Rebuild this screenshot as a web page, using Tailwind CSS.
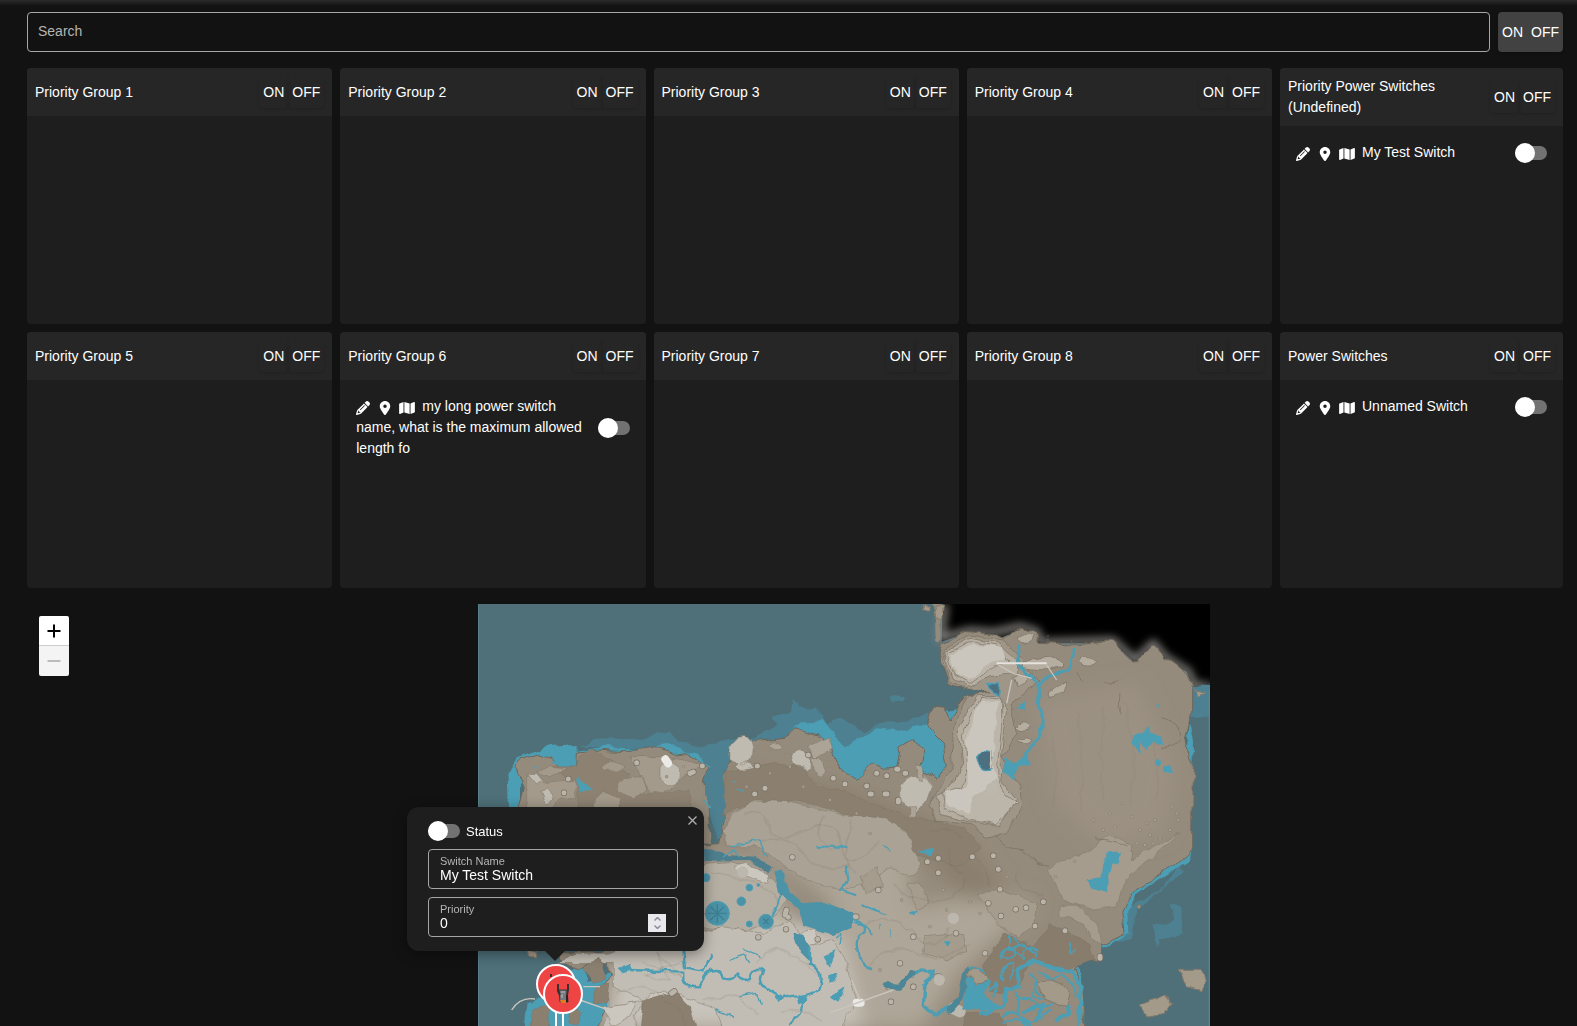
<!DOCTYPE html>
<html lang="en">
<head>
<meta charset="utf-8">
<meta name="viewport" content="width=device-width, initial-scale=1">
<title>Power Switches</title>
<script src="https://cdn.jsdelivr.net/npm/@tailwindcss/browser@4"></script>
</head>
<body class="flex h-screen flex-col overflow-hidden bg-[#121212] pr-3.5 pl-[27px] font-['Liberation_Sans',Arial,sans-serif] text-sm leading-[21px] text-white">

<!-- Shared icon shapes -->
<svg class="hidden" aria-hidden="true">
  <symbol id="pencil" viewBox="0 0 512 512"><path fill="currentColor" d="M410.3 231l11.3-11.3-33.9-33.9-62.1-62.1L291.7 89.8l-11.3 11.3-22.6 22.6L58.6 322.9c-10.4 10.4-18 23.3-22.2 37.4L1 480.7c-2.5 8.4-.2 17.5 6.1 23.7s15.3 8.5 23.7 6.1l120.3-35.4c14.1-4.2 27-11.8 37.4-22.2L387.7 253.7 410.3 231zM160 399.4l-9.1 22.7c-4 3.1-8.5 5.4-13.3 6.9L59.4 452l23-78.1c1.4-4.9 3.8-9.4 6.9-13.3l22.7-9.1v32c0 8.8 7.2 16 16 16h32zM362.7 18.7L348.3 33.2 325.7 55.8 314.3 67.1l33.9 33.9 62.1 62.1 33.9 33.9 11.3-11.3 22.6-22.6 14.5-14.5c25-25 25-65.5 0-90.5L453.3 18.7c-25-25-65.5-25-90.5 0zm-47.4 168l-144 144c-6.2 6.2-16.4 6.2-22.6 0s-6.2-16.4 0-22.6l144-144c6.2-6.2 16.4-6.2 22.6 0s6.2 16.4 0 22.6z"/></symbol>
  <symbol id="pin" viewBox="0 0 384 512"><path fill="currentColor" d="M215.7 499.2C267 435 384 279.4 384 192C384 86 298 0 192 0S0 86 0 192c0 87.4 117 243 168.3 307.2c12.3 15.3 35.1 15.3 47.4 0zM192 128a64 64 0 1 1 0 128 64 64 0 1 1 0-128z"/></symbol>
  <symbol id="map" viewBox="0 0 576 512"><path fill="currentColor" d="M384 476.1L192 421.2V35.9L384 90.8V476.1zm32-1.2V88.4L543.1 37.5c15.8-6.3 32.9 5.3 32.9 22.3V394.6c0 9.8-6 18.6-15.1 22.3L416 474.8zM15.1 95.1L160 37.2V423.6L32.9 474.5C17.1 480.8 0 469.2 0 452.2V117.4c0-9.8 6-18.6 15.1-22.3z"/></symbol>
</svg>

<div class="pointer-events-none absolute inset-x-0 top-0 h-1.5 bg-linear-to-b from-[#2c2c2c] to-[#121212]"></div>

<header class="flex shrink-0 gap-2 pt-3">
  <input type="search" aria-label="Search" placeholder="Search" class="h-10 min-w-0 flex-1 rounded border border-[#a6a6a6] bg-transparent px-2.5 pb-0.5 placeholder:text-[#b5b5b5]">
  <div class="flex h-10 w-[65px] items-center rounded bg-[#424242] shadow">
    <button class="h-8 px-1">ON</button><button class="h-8 px-1">OFF</button>
  </div>
</header>

<main class="flex min-h-0 flex-1 flex-col gap-4 pt-4">
  <div class="grid shrink-0 grid-cols-[repeat(4,minmax(0,1fr))_283px] gap-2">
    <section class="h-64 overflow-hidden rounded bg-[#1e1e1e]">
      <div class="flex items-center justify-between bg-[#262626] p-2"><h2>Priority Group 1</h2><div class="flex shrink-0"><button class="h-8 rounded px-1 shadow">ON</button><button class="h-8 rounded px-1 shadow">OFF</button></div></div>
    </section>
    <section class="h-64 overflow-hidden rounded bg-[#1e1e1e]">
      <div class="flex items-center justify-between bg-[#262626] p-2"><h2>Priority Group 2</h2><div class="flex shrink-0"><button class="h-8 rounded px-1 shadow">ON</button><button class="h-8 rounded px-1 shadow">OFF</button></div></div>
    </section>
    <section class="h-64 overflow-hidden rounded bg-[#1e1e1e]">
      <div class="flex items-center justify-between bg-[#262626] p-2"><h2>Priority Group 3</h2><div class="flex shrink-0"><button class="h-8 rounded px-1 shadow">ON</button><button class="h-8 rounded px-1 shadow">OFF</button></div></div>
    </section>
    <section class="h-64 overflow-hidden rounded bg-[#1e1e1e]">
      <div class="flex items-center justify-between bg-[#262626] p-2"><h2>Priority Group 4</h2><div class="flex shrink-0"><button class="h-8 rounded px-1 shadow">ON</button><button class="h-8 rounded px-1 shadow">OFF</button></div></div>
    </section>
    <section class="h-64 overflow-hidden rounded bg-[#1e1e1e]">
      <div class="flex items-center justify-between bg-[#262626] p-2"><h2>Priority Power Switches (Undefined)</h2><div class="flex shrink-0"><button class="h-8 rounded px-1 shadow">ON</button><button class="h-8 rounded px-1 shadow">OFF</button></div></div>
      <div class="flex items-center justify-between gap-3 p-4">
        <p><button aria-label="Edit" class="mr-2 align-[-4px]"><svg class="size-3.5"><use href="#pencil"/></svg></button><button aria-label="Locate" class="mr-2 align-[-4px]"><svg class="size-3.5"><use href="#pin"/></svg></button><button aria-label="Show on map" class="mr-2 align-[-4px]"><svg class="-mx-px h-3.5 w-4"><use href="#map"/></svg></button><label for="sw1">My Test Switch</label></p>
        <input id="sw1" type="checkbox" role="switch" class="relative flex h-5 w-8 shrink-0 appearance-none items-center before:h-3.5 before:w-full before:rounded-full before:bg-[#727272] after:absolute after:left-0 after:size-5 after:rounded-full after:bg-white checked:after:left-3">
      </div>
    </section>

    <section class="h-64 overflow-hidden rounded bg-[#1e1e1e]">
      <div class="flex items-center justify-between bg-[#262626] p-2"><h2>Priority Group 5</h2><div class="flex shrink-0"><button class="h-8 rounded px-1 shadow">ON</button><button class="h-8 rounded px-1 shadow">OFF</button></div></div>
    </section>
    <section class="h-64 overflow-hidden rounded bg-[#1e1e1e]">
      <div class="flex items-center justify-between bg-[#262626] p-2"><h2>Priority Group 6</h2><div class="flex shrink-0"><button class="h-8 rounded px-1 shadow">ON</button><button class="h-8 rounded px-1 shadow">OFF</button></div></div>
      <div class="flex items-center justify-between gap-3 p-4">
        <p><button aria-label="Edit" class="mr-2 align-[-4px]"><svg class="size-3.5"><use href="#pencil"/></svg></button><button aria-label="Locate" class="mr-2 align-[-4px]"><svg class="size-3.5"><use href="#pin"/></svg></button><button aria-label="Show on map" class="mr-2 align-[-4px]"><svg class="-mx-px h-3.5 w-4"><use href="#map"/></svg></button><label for="sw2">my long power switch name, what is the maximum allowed length fo</label></p>
        <input id="sw2" type="checkbox" role="switch" class="relative flex h-5 w-8 shrink-0 appearance-none items-center before:h-3.5 before:w-full before:rounded-full before:bg-[#727272] after:absolute after:left-0 after:size-5 after:rounded-full after:bg-white checked:after:left-3">
      </div>
    </section>
    <section class="h-64 overflow-hidden rounded bg-[#1e1e1e]">
      <div class="flex items-center justify-between bg-[#262626] p-2"><h2>Priority Group 7</h2><div class="flex shrink-0"><button class="h-8 rounded px-1 shadow">ON</button><button class="h-8 rounded px-1 shadow">OFF</button></div></div>
    </section>
    <section class="h-64 overflow-hidden rounded bg-[#1e1e1e]">
      <div class="flex items-center justify-between bg-[#262626] p-2"><h2>Priority Group 8</h2><div class="flex shrink-0"><button class="h-8 rounded px-1 shadow">ON</button><button class="h-8 rounded px-1 shadow">OFF</button></div></div>
    </section>
    <section class="h-64 overflow-hidden rounded bg-[#1e1e1e]">
      <div class="flex items-center justify-between bg-[#262626] p-2"><h2>Power Switches</h2><div class="flex shrink-0"><button class="h-8 rounded px-1 shadow">ON</button><button class="h-8 rounded px-1 shadow">OFF</button></div></div>
      <div class="flex items-center justify-between gap-3 p-4">
        <p><button aria-label="Edit" class="mr-2 align-[-4px]"><svg class="size-3.5"><use href="#pencil"/></svg></button><button aria-label="Locate" class="mr-2 align-[-4px]"><svg class="size-3.5"><use href="#pin"/></svg></button><button aria-label="Show on map" class="mr-2 align-[-4px]"><svg class="-mx-px h-3.5 w-4"><use href="#map"/></svg></button><label for="sw3">Unnamed Switch</label></p>
        <input id="sw3" type="checkbox" role="switch" class="relative flex h-5 w-8 shrink-0 appearance-none items-center before:h-3.5 before:w-full before:rounded-full before:bg-[#727272] after:absolute after:left-0 after:size-5 after:rounded-full after:bg-white checked:after:left-3">
      </div>
    </section>
  </div>

  <!-- World map canvas -->
  <div class="relative min-h-0 flex-1 overflow-hidden">
    <svg class="absolute top-0 left-[451px] h-[422px] w-[732px]" viewBox="24 12 2196 1266" role="img" aria-label="World map">
      <defs>
        <filter id="rough" x="0" y="0" width="2300" height="1300" filterUnits="userSpaceOnUse"><feTurbulence type="fractalNoise" baseFrequency="0.022" numOctaves="2" seed="4"/><feDisplacementMap in="SourceGraphic" scale="26" xChannelSelector="R" yChannelSelector="G"/></filter>
        <filter id="rough2" x="0" y="0" width="2300" height="1300" filterUnits="userSpaceOnUse"><feTurbulence type="fractalNoise" baseFrequency="0.03" numOctaves="2" seed="9"/><feDisplacementMap in="SourceGraphic" scale="18" xChannelSelector="R" yChannelSelector="G"/></filter>
        <filter id="glow"><feGaussianBlur stdDeviation="12"/></filter>
        <filter id="soft"><feGaussianBlur stdDeviation="30"/></filter>
        <path id="land" d="M135 500L150 480 200 462 240 475 270 505 320 500 322 462 370 450 470 455 560 440 620 462 650 458 690 482 714 500 700 540 712 600 722 740H150L145 620 160 560ZM695 735V1055H262L270 1080 330 1112 400 1075 430 1125 408 1150 412 1220 380 1290H1840L1845 1170 1810 1110 1850 1080 1885 1085 1895 1035 1965 1000 1958 930 1985 880 2090 810 2150 770 2168 740 2170 500 2145 420 2168 340 2168 265 2155 225 2115 195 2085 175 2050 135 2000 185 1970 165 1930 125 1810 135 1705 130 1700 98 1650 85 1600 115 1570 102 1490 95 1412 130 1405 160 1440 250 1480 270 1565 250 1590 270 1550 275 1485 290 1440 360 1425 322 1390 318 1370 380 1420 430 1435 490 1400 540 1350 505 1366 445 1330 422 1292 445 1280 500 1240 505 1210 490 1160 535 1110 505 1085 450 1060 410 1030 405 980 388 945 412 850 422 815 412 790 470 762 520 760 640 745 735Z"/>
      </defs>
      <rect x="24" y="12" width="2196" height="1266" fill="#4f7079"/>
      <!-- Void in the north-east -->
      <path d="M1418 12H2220V268L2168 262 2150 215 2080 180 1990 185 1930 130H1705L1650 90 1590 115 1500 95 1415 125Z" fill="#000"/>
      <path d="M1425 12L1412 115 1500 92 1570 98 1650 80 1700 95 1710 128 1930 122 1995 182 2050 130 2085 172 2155 215 2172 258H2220" fill="none" stroke="#8f8d89" stroke-width="20" filter="url(#glow)"/>
      <!-- Shallows -->
      <g filter="url(#rough)">
        <path d="M330 440L400 415 520 420 560 400 600 395 620 430 700 440 780 420 850 415 880 395 915 385 910 350 960 335 965 300 990 325 1040 320 1070 370 1110 350 1180 400 1230 370 1330 360 1420 320 1455 340 1440 560H1000L900 440 780 470 770 700 742 715 715 640 700 520 620 450Z" fill="#4d8090"/>
        <path d="M2160 260H2220V350H2165ZM2050 970L2085 975 2110 950 2095 915 2130 920 2140 1000 2100 1010 2070 1020 2060 1040ZM1975 920L2080 860 2130 790 2140 820 2100 850 2060 880 2000 930 1985 1020 1940 1030ZM1265 290L1310 295 1300 310 1270 305Z" fill="#4d8090"/>
        <path d="M118 640L112 520 140 475 240 440 320 435 320 455 400 440 500 450 590 435 650 455 690 465 720 500 700 500 640 480 350 480 370 570 320 590 270 560 180 510 150 550 150 640ZM960 400L1000 365 1060 360 1090 400 1120 440 1180 410 1225 385 1290 395 1380 370 1440 440 1440 530 1390 550 1340 520 1280 550 1210 500 1160 540 1060 500 1040 430ZM1430 330L1460 325 1440 370 1425 360Z" fill="#4c9eb4"/>
        <path d="M160 1290L170 1210 240 1190 300 1110 340 1090 350 1150 430 1110 400 1290Z" fill="#4c9eb4"/>
        <path d="M2160 370L2172 420 2165 740 2160 780 2085 825 1995 885 1975 930 1978 1000 1900 1045 1820 1100 1845 1160 1842 1290H1470L1500 1090 1900 1000 1960 900 2100 790Z" fill="#4c9eb4"/>
      </g>
      <!-- Land masses -->
      <g filter="url(#rough)">
        <path d="M1392 0H1412L1410 125H1398Z" fill="#958b7b"/>
        <use href="#land" fill="#958b7b" stroke="#6f6659" stroke-width="3"/>
      </g>
      <clipPath id="onland"><use href="#land"/></clipPath>
      <g clip-path="url(#onland)">
        <g filter="url(#soft)">
          <path d="M780 500L1110 560 1330 640 1480 720 1600 860 1540 960 1400 800 1290 700 1000 620 760 600Z" fill="#8a7f6e"/>
          <path d="M720 1080L900 940 1110 1000 1180 1290H400L440 1080Z" fill="#c9c4bb"/>
          <path d="M800 620L1100 620 1310 760 1330 920 1450 900 1700 900 1600 1000 1480 1100 1350 1290 1180 1290 1080 900 900 760Z" fill="#aea698"/>
          <path d="M700 790L850 790 950 900 900 980 700 1020Z" fill="#b5aea2"/>
          <path d="M1700 300L2000 250 2120 500 2080 700 1900 740 1750 600Z" fill="#9b9182"/>
        </g>
      </g>
      <g filter="url(#rough2)" stroke="#7b7264" stroke-width="2" stroke-opacity=".7" stroke-linejoin="round">
        <!-- North-west plateau -->
        <path d="M325 470L370 452 420 480 480 520 460 560 520 585 660 570 665 640H320L325 560 290 540 250 500 320 500Z" fill="#8d8272"/>
        <path d="M395 500Q430 470 465 500 450 520 400 512ZM440 560Q450 530 520 530L530 570 490 590 445 580ZM170 530L200 520 230 550 320 540 315 600 270 590 240 640H170ZM200 515L240 500 290 508 240 530ZM370 600Q400 550 450 600L450 640H370ZM480 470L570 470 640 480 700 495 640 530 600 570 540 580 520 540Z" fill="#a39a8b"/>
        <path d="M570 500Q580 475 610 485Q640 520 620 550Q590 570 570 540ZM780 480Q775 430 805 412Q845 400 850 440Q850 480 820 495ZM795 500Q820 475 850 500Q865 530 840 530ZM965 470Q970 440 995 447Q1025 480 1020 505Q990 520 970 490ZM1290 600Q1280 550 1330 530Q1385 520 1385 570Q1370 610 1340 635L1310 615ZM215 570L235 565 245 600 225 612ZM175 525L200 520 220 545 200 555Z" fill="#c0bbb1"/>
        <path d="M1010 440L1080 410 1090 445 1030 480ZM1320 620H1340L1328 740 1300 720 1315 700ZM1350 500L1335 490 1345 540H1358ZM1020 480L1050 475 1070 520 1045 530ZM895 440Q900 430 925 432Q950 445 920 450Q900 450 895 440Z" fill="#aca496"/>
        <!-- Dark basin -->
        <path d="M765 520L900 490 1000 500 1040 560 1120 570 1200 610 1320 650 1480 680 1530 740 1480 800 1320 760 1250 700 1120 640 980 600 800 620 760 650Z" fill="#8b806f"/>
        <path d="M790 640L860 600 950 605 1120 645 1240 650 1310 700 1355 800 1320 830 1260 800 1200 850 1110 870 1010 840 930 790 870 740 770 740 760 690Z" fill="#aaa294"/>
        <path d="M1170 830L1220 800 1240 860 1190 880ZM1310 850L1350 850 1380 910 1340 930ZM1520 880L1600 870 1700 910 1690 980 1640 1010 1590 980ZM1770 920Q1800 900 1840 930Q1890 970 1895 1030Q1860 1030 1860 1000Q1830 950 1770 950ZM1360 1010L1480 1000 1490 1050 1430 1080 1360 1060ZM1735 810Q1780 770 1850 760L1920 700 1990 740 1980 780 2130 700 2000 810 1960 850 1940 920 1870 930 1780 900Z" fill="#a59c8d"/>
        <!-- Central snowfield -->
        <path d="M700 790L780 785 870 810 920 850 950 900 900 960 840 990 700 980Z" fill="#b5aea2"/>
        <path d="M260 1090L320 1060 410 1060 560 1020 760 980 880 1000 960 960 1010 1040 1090 1020 1130 1090 1160 1200 1110 1290H760L740 1230 620 1180 540 1180 490 1250 510 1290H400L420 1220 520 1200 430 1160 430 1090Z" fill="#c2bdb4"/>
        <path d="M520 1200L620 1180 660 1220 680 1290H510ZM340 1100L390 1075 410 1140 370 1150ZM185 1230L240 1215 235 1290H180ZM300 1220L335 1240 320 1275 295 1270ZM375 1160L420 1150 412 1210 370 1210Z" fill="#8b806f"/>
        <path d="M790 800L830 790 900 830 890 850 820 825ZM400 1220L500 1205 480 1250 430 1278ZM990 1000L1030 985 1055 1020 1020 1040Z" fill="#cbc7bf"/>
        <!-- Southern marsh -->
        <path d="M1540 1095L1600 1000 1690 1040 1740 970 1780 990 1860 1030 1870 1080 1790 1110 1680 1080 1650 1160 1600 1180 1560 1170Z" fill="#887d6c"/>
        <path d="M1490 1240H1590L1620 1290H1480Z" fill="#887d6c"/>
      </g>
      <!-- Northern mountains -->
      <g filter="url(#rough)" fill="none" stroke="#756c5f" stroke-width="2">
        <path d="M1415 150L1500 105 1600 120 1650 170 1700 240 1660 290 1620 310 1640 400 1600 470 1650 560 1655 620 1610 700 1550 715 1500 670 1400 660 1380 610 1420 550 1450 500 1445 400 1490 290 1560 275 1480 265 1440 240Z" fill="#9f9688"/>
        <path d="M1420 155L1500 115 1590 130 1640 180 1640 220 1560 230 1500 260 1450 235ZM1465 390L1520 290 1590 290 1610 330 1600 400 1590 540 1640 600 1590 680 1500 665 1410 640 1400 590 1450 550 1475 490Z" fill="#b4ada0"/>
        <path d="M1430 160L1500 125 1580 138 1620 180 1560 205 1500 250 1455 225ZM1480 400L1530 295 1595 300 1595 380 1580 520 1600 580 1640 610 1580 675 1500 660 1420 620 1415 580 1475 560 1490 500Z" fill="#bcb6aa"/>
        <path d="M1440 165L1500 135 1600 142 1610 175 1540 195 1500 240 1460 225ZM1490 420L1530 305 1590 310 1575 360 1565 490 1580 540 1510 590 1500 640 1420 610 1425 575 1490 560Z" fill="#cac6bd" stroke="none"/>
        <path d="M1645 110Q1665 90 1690 110Q1690 130 1665 130Q1645 125 1645 110ZM1660 195Q1690 165 1730 170 1780 170 1775 205 1730 220 1660 205ZM1825 190Q1850 150 1880 185 1855 215 1825 190ZM1740 275L1790 240 1780 275 1745 290ZM1630 235Q1650 215 1670 235 1670 265 1640 262ZM1635 380Q1660 350 1685 380 1660 400 1635 380ZM1640 425Q1660 405 1685 420 1665 440 1640 425Z" fill="#b4ada0"/>
        <path d="M1800 140L1805 115M1730 130L1735 110M1820 220L1850 245M1900 240Q1930 255 1945 240M1950 280Q1945 320 1955 340M2075 350Q2130 370 2130 410M2130 420L2080 445M1875 720Q1960 720 1990 760M1580 705L1605 740 1660 750 1700 790 1740 795"/>
      </g>
      <!-- Terrain contours -->
      <g filter="url(#rough)" fill="none" stroke="#6f665a" stroke-width="2">
        <path opacity=".4" d="M820 640Q880 620 900 680T1010 690 1110 740 1230 720M860 720Q960 700 1000 760T1140 800M1150 660L1120 760 1150 820M1060 640L1040 700 1090 750M720 820Q820 830 880 860T910 940M1180 980Q1250 930 1330 1000T1440 980M1200 1100Q1260 1020 1330 1060T1500 1030M1270 850Q1300 900 1390 900T1480 830M1500 760Q1560 800 1560 860M1440 740Q1420 800 1480 820M1640 820Q1640 880 1720 880M1380 690Q1450 680 1470 720M520 1090L640 1130 560 1060 600 1140 520 1130 640 1080M440 1180Q520 1140 580 1190M860 1090Q900 1020 960 1060T1040 1120M700 1200Q800 1160 860 1240M930 1240Q1000 1210 1060 1270M580 1200Q640 1220 650 1278"/>
        <path opacity=".15" d="M1750 620Q1770 500 1740 420M1830 640Q1850 480 1820 340M1900 600Q1890 450 1900 320M1980 620Q2010 450 1960 300M2060 600Q2080 480 2030 380"/>
      </g>
      <!-- Boulders: dark rim, then lighter top -->
      <g stroke-linecap="round" fill="none">
        <path stroke="#776e61" stroke-width="19" d="M1125 552h0M1190 558h0M1200 582h4M1245 582h6M1285 600v6M1305 520h2M1280 508h4M1220 520h0M1250 527h0M1090 535h0M1015 465h0M862 498h0M854 582h0M885 565h0M500 488h0M282 578h0M295 537h0M660 520l10 -4M697 498h0M605 1180l8 -6M945 945l4 -15M955 952h0M948 988h0M865 1012h0M1043 1018h0M1155 950h4M1405 818h0M1405 775h0M1507 770h0M1570 767h0M1585 808h0M1372 785h0M1590 868h0M1555 910h0M1545 1060h0M1668 923h0M1637 928h0M1695 978h0M1785 992h0M1593 948h0M1720 905h0M1330 1160h0M1263 1205h0M1400 1130h8M1290 1090h0M1512 1145h0M1330 1010h0M1458 1000h0M1225 870h0M967 772h0M1890 1075v-6"/>
        <path stroke="#bab4a9" stroke-width="15" d="M1125 552h0M1190 558h0M1200 582h4M1245 582h6M1285 600v6M1305 520h2M1280 508h4M1220 520h0M1250 527h0M1090 535h0M1015 465h0M862 498h0M854 582h0M885 565h0M500 488h0M282 578h0M295 537h0M660 520l10 -4M697 498h0M605 1180l8 -6M945 945l4 -15M955 952h0M948 988h0M865 1012h0M1043 1018h0M1155 950h4M1405 818h0M1405 775h0M1507 770h0M1570 767h0M1585 808h0M1372 785h0M1590 868h0M1555 910h0M1545 1060h0M1668 923h0M1637 928h0M1695 978h0M1785 992h0M1593 948h0M1720 905h0M1330 1160h0M1263 1205h0M1400 1130h8M1290 1090h0M1512 1145h0M1330 1010h0M1458 1000h0M1225 870h0M967 772h0M1890 1075v-6"/>
        <path stroke="#857b6d" stroke-width="10" d="M1757 830h0M1814 784h0M1935 680h0M1900 690h0M1870 660h0M1955 610h0M2010 690h0M2040 705h0M2055 660h0M2070 715h0M2100 690h0M2120 640h0M2105 620h0M2125 660h0M2000 730h0M2025 735h0M2050 730h0M1985 650h0M1920 640h0M2030 670h0M1470 1060h0M1420 1145h0M1230 1110h0M1250 1165h0M1360 1050h0M1530 1210h0M1295 900h0M1530 940h0M1500 905h0M1610 830h0M1200 700h0M1160 640h0M1080 600h0M900 520h0M960 500h0M830 560h0M590 530h0M640 500h0M1000 560h0M1420 870h0M1430 930h0M1380 980h0"/>
        <path stroke="#a9a092" stroke-width="7" d="M1757 830h0M1814 784h0M1935 680h0M1900 690h0M1870 660h0M1955 610h0M2010 690h0M2040 705h0M2055 660h0M2070 715h0M2100 690h0M2120 640h0M2105 620h0M2125 660h0M2000 730h0M2025 735h0M2050 730h0M1985 650h0M1920 640h0M2030 670h0M1470 1060h0M1420 1145h0M1230 1110h0M1250 1165h0M1360 1050h0M1530 1210h0M1295 900h0M1530 940h0M1500 905h0M1610 830h0M1200 700h0M1160 640h0M1080 600h0M900 520h0M960 500h0M830 560h0M590 530h0M640 500h0M1000 560h0M1420 870h0M1430 930h0M1380 980h0"/>
        <path stroke="#bdb8ae" stroke-width="34" d="M1450 955h0M1408 1140h0M1450 1225l20 10M1565 565h0M1505 1145h0M818 816h0"/>
        <path stroke="#eceae6" stroke-width="24" d="M586 478l8 12M1160 1208h12"/>
      </g>
      <!-- Lakes and rivers -->
      <g filter="url(#rough2)" fill="#4d93a7">
        <path d="M700 745L770 765 850 770 905 800 895 825 840 780 700 782Z" fill="#4d7f8e"/>
        <path d="M705 520L760 500 765 620 742 712 722 640 705 580Z" fill="#4d8090"/>
        <path d="M910 815L935 805 955 870 1000 910 1060 905 1150 940 1145 980 1090 1005 1040 990 1000 975 985 925 930 885ZM970 1000L1000 1005 1025 1050 1015 1080 985 1050Z"/>
        <path d="M1520 475Q1530 445 1563 455V505Q1530 520 1520 475ZM1550 250L1590 252 1585 290 1570 280Z" fill="#4d7080" stroke="#4c9eb4" stroke-width="4"/>
        <g fill="#4c9eb4">
          <path d="M1915 750L1955 765 1950 790 1925 795 1912 830 1915 880 1860 865 1850 840 1895 835 1900 790ZM1980 430L1990 405 2020 400 2030 375 2040 400 2075 410 2080 440 2050 425 2030 450 2010 425 2010 455ZM2060 475l15 10 -5 15 -10 -5ZM2080 500l20 -5 10 25 -30 -5ZM2055 320l15 -5v10ZM1600 470L1640 490 1670 460 1680 490 1650 500 1630 540 1600 520ZM1640 320L1670 305 1665 330ZM1310 940L1350 930 1330 950ZM1418 1020l25 5 -10 15ZM1350 750l40 -10 -10 30ZM320 530L370 570 330 580ZM245 490L310 460 300 500ZM440 1105L480 1090 490 1110 455 1120ZM1100 1050L1060 1070 1080 1100ZM1075 1125l20 -5 5 20 -25 5ZM1080 1190l45 -30 -20 45Z"/>
          <path d="M1500 1100L1540 1110 1560 1150 1540 1180 1570 1210 1600 1230 1480 1225Z"/>
          <path d="M980 1190Q1000 1180 1015 1195Q1010 1215 985 1210ZM920 1190l15 -5 5 15h-15Z"/>
        </g>
      </g>
      <g fill="#4c93a8" stroke="#4c9eb4" stroke-width="3"><circle cx="742" cy="940" r="36"/><circle cx="888" cy="965" r="22"/><circle cx="708" cy="833" r="12"/><circle cx="838" cy="863" r="10"/><circle cx="814" cy="904" r="13"/><circle cx="838" cy="972" r="9"/><circle cx="865" cy="855" r="4"/></g>
      <path d="M742 912v56M714 940h56M722 920l40 40M762 920l-40 40M880 955l16 18M896 955l-16 18" stroke="#3d7f92" stroke-width="4"/>
      <g filter="url(#rough2)" fill="none" stroke="#4c9eb4" stroke-width="9" stroke-linecap="round" stroke-linejoin="round">
        <path d="M1650 140L1642 190 1670 225 1708 250 1702 310 1720 360 1705 410 1680 450 1640 490M1708 250L1740 225 1800 205 1812 148"/>
        <path d="M640 1050L645 1105 700 1115 725 1065M480 1110L640 1115 640 1140Q660 1165 690 1162Q700 1110 740 1110 760 1110 760 1135 790 1145 800 1120 820 1145 840 1140 850 1100 880 1110 860 1140 880 1160L940 1195Q970 1180 1000 1190Q1050 1180 1050 1150Q1060 1110 1020 1090V1050M1150 960Q1190 970 1180 1000 1150 1010 1165 1060L1200 1110M1000 1210L990 1240 960 1270" stroke-width="7"/>
        <path d="M1290 1155L1350 1110 1390 1115 1365 1150 1360 1220 1400 1245 1440 1220" stroke-width="10"/>
        <path d="M1250 1158L1290 1160 1330 1120M1440 1230L1475 1190 1490 1110" stroke="#4d8696" stroke-width="18"/>
        <path d="M1180 910L1240 945M1110 870L1135 840 1130 800M930 890L905 945M1040 740L1130 740M1155 970l30 10 20 20M1110 870l40 15" stroke-width="6"/>
        <path d="M1530 1240L1600 1220 1610 1170 1650 1160 1640 1110 1690 1080 1750 1105 1810 1115 1835 1170 1825 1270M1660 1240L1720 1210 1700 1260M1760 1260L1800 1240 1780 1200" stroke-width="12"/>
        <path d="M1600 1070q40 10 40 -20t30 -10 30 30M1620 1010v40l30 -15 -20 -20M1660 1060q10 -30 40 -10M1590 1075q20 -40 50 -20t20 20M1600 1140q-20 -40 30 -50l-10 50M1560 1170l20 -20 -10 40M1680 1120q30 20 10 50t40 20M1710 1120l40 20 20 -20 40 30M1640 1200q40 -10 60 10t50 0M1600 1250q20 -30 50 0t50 10 40 -30M1600 1270q40 -30 80 10M1640 1180q20 30 0 60M1700 1140q-20 20 10 40M1800 1030v30l15 -10M1780 1130q40 20 40 60" stroke-width="6"/>
        <path d="M1100 1010q20 -20 10 20M1260 990v20M1230 970v10M780 740l90 -20 20 50M760 770l30 -20 20 20M190 500l10 4M820 1050l50 20M780 1080l40 -20 20 30M810 1190l50 -10 10 30M740 1230l50 20M800 570h20M790 545h5M700 600l20 20M1240 740l20 10" stroke-width="4"/>
      </g>
      <path d="M1580 190h150" stroke="#e6e3de" stroke-width="6"/>
      <path d="M1562 370V505M1585 195L1630 220 1685 235M1625 240L1610 310M1730 195L1760 240M330 1200L410 1228M1080 1238L1270 1170M1145 1140L1170 1200M340 1160h50M125 1230Q150 1190 195 1197" fill="none" stroke="#c9c5bd" stroke-width="4"/>
      <!-- Small islands -->
      <g filter="url(#rough2)" fill="#a39a8a" stroke="#837969" stroke-width="3">
        <path d="M2125 1108L2195 1108 2212 1145 2195 1172 2150 1160ZM2008 1215L2090 1185 2102 1210 2080 1240 2030 1248ZM1360 15h20v15h-20ZM1395 15h22l-5 40h-15ZM175 1058h25v15h-20ZM2000 917l15 4 -8 6ZM2170 270l35 5 -20 10ZM1490 1120q20 -20 50 0t-20 30ZM1700 1150Q1760 1120 1800 1180L1790 1220 1730 1200Z"/>
      </g>
      <path d="M24 12V1278M2218 270V1278" stroke="#5d8790" stroke-width="4"/>
    </svg>

    <!-- Switch markers -->
    <svg class="absolute top-[358px] left-[507px] h-16 w-14" viewBox="0 0 56 64" aria-hidden="true">
      <path d="M22 36V64M29 48V64" stroke="#fff" stroke-width="2"/>
      <circle cx="22" cy="22" r="19" fill="#ef4444" stroke="#fff" stroke-width="2"/>
      <path d="M17 12v3M27 12v3" stroke="#333" stroke-width="2"/>
      <circle cx="29" cy="32" r="19" fill="#ef4444" stroke="#fff" stroke-width="2"/>
      <path d="M25 28h8l1 12h-8Z" fill="#77777c" stroke="#39373a"/>
      <path d="M24 22v7l2 4M34 22v6l-1 5" fill="none" stroke="#3a3030" stroke-width="2"/>
      <path d="M27 30h4M28 32v4" stroke="#b5bcc2"/><path d="M26 38h6v3h-5Z" fill="#e47a20"/><path d="M33 33v7" stroke="#252525" stroke-width="2"/>
    </svg>

    <div class="absolute top-3 left-3 w-[30px] overflow-hidden rounded-xs">
      <button aria-label="Zoom in" class="flex h-[30px] w-full items-center justify-center border-b border-[#ccc] bg-white"><svg class="size-3.5" viewBox="0 0 14 14" stroke="#000" stroke-width="2"><path d="M.5 7h13M7 .5v13"/></svg></button>
      <button aria-label="Zoom out" disabled class="flex h-[30px] w-full items-center justify-center bg-[#f4f4f4]"><svg class="size-3.5" viewBox="0 0 14 14" stroke="#bbb" stroke-width="2"><path d="M.5 7h13"/></svg></button>
    </div>

    <!-- Marker popup -->
    <div class="absolute top-[203px] left-[380px] w-[297px] rounded-xl bg-[#1e1e1e] py-3.5 pr-[26px] pl-[21px] shadow-[0_3px_14px_rgba(0,0,0,0.4)]">
      <button aria-label="Close popup" class="absolute top-[9px] right-[7px]"><svg class="size-[9px]" viewBox="0 0 9 9" stroke="#b0b0b0" stroke-width="1.3"><path d="M.5 .5l8 8M8.500 .5l-8 8"/></svg></button>
      <div class="flex flex-col gap-2">
        <div class="flex h-5 items-center gap-1.5">
          <input id="status" type="checkbox" role="switch" class="relative flex h-5 w-8 shrink-0 appearance-none items-center before:h-3.5 before:w-full before:rounded-full before:bg-[#727272] after:absolute after:left-0 after:size-5 after:rounded-full after:bg-white checked:after:left-3">
          <label for="status" class="text-[13px]">Status</label>
        </div>
        <div class="flex h-10 flex-col justify-center rounded border border-[#a6a6a6] px-[11px]">
          <label for="name" class="text-[11px] leading-3 text-[#b5b5b5]">Switch Name</label>
          <input id="name" value="My Test Switch" class="h-4 w-full bg-transparent leading-4">
        </div>
        <div class="relative flex h-10 flex-col justify-center rounded border border-[#a6a6a6] px-[11px]">
          <label for="priority" class="text-[11px] leading-3 text-[#b5b5b5]">Priority</label>
          <input id="priority" type="number" value="0" class="h-4 w-full [appearance:textfield] bg-transparent leading-4">
          <div class="absolute right-[11px] bottom-1 flex size-[18px] flex-col items-center justify-center gap-1 bg-[#e9e9ed]">
            <button aria-label="Increase"><svg class="block h-1 w-[7px]" viewBox="0 0 7 4" fill="none" stroke="#8f8f9d" stroke-width="1.500"><path d="M.5 3.500l3-3 3 3"/></svg></button>
            <button aria-label="Decrease"><svg class="block h-1 w-[7px]" viewBox="0 0 7 4" fill="none" stroke="#8f8f9d" stroke-width="1.500"><path d="M.5 .5l3 3 3-3"/></svg></button>
          </div>
        </div>
      </div>
      <div class="absolute top-full left-[138px] h-[10px] w-5 bg-[#1e1e1e] [clip-path:polygon(0_0,100%_0,50%_100%)]"></div>
    </div>
  </div>
</main>
</body>
</html>
